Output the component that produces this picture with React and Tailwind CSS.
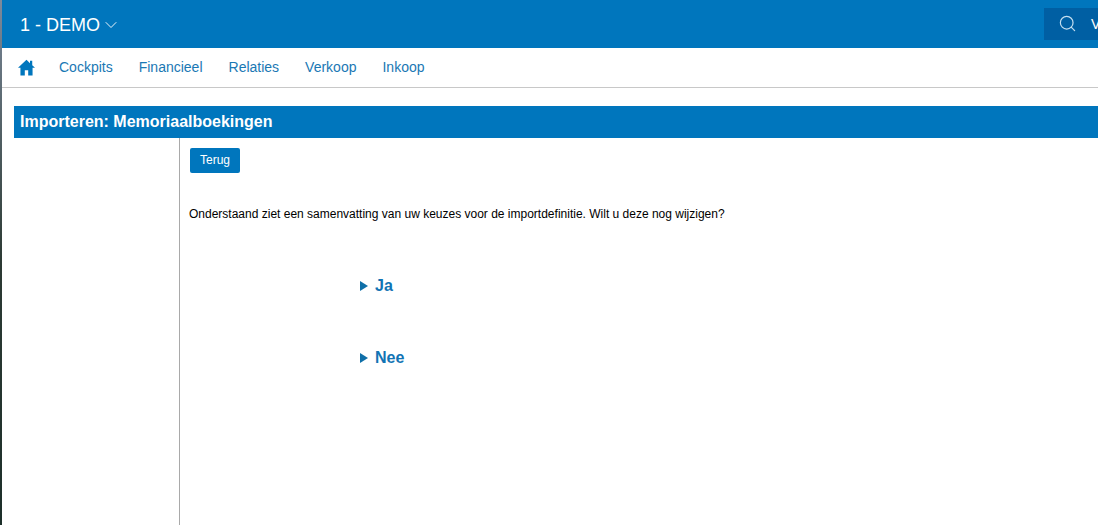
import React from 'react';
import { ChevronDown, Search } from 'lucide-react';

const menuItems = ['Cockpits', 'Financieel', 'Relaties', 'Verkoop', 'Inkoop'];
const choices = ['Ja', 'Nee'];

const HomeIcon = () => (
  <svg viewBox="0 0 16 16" className="w-[17px] h-[17px] fill-[#0076bd]">
    <path d="M8 .8 0 8.2h2.3V15.5h4.1v-4.9h3.2v4.9h4.1V8.2H16l-2.6-2.4V1.6h-2.1v2.3z" />
  </svg>
);

const App = () => {
  return (
    <div className="flex h-[525px] w-[1098px] overflow-hidden bg-white font-['Liberation_Sans',Arial,sans-serif]">
      {/* Streepje van de achtergrond links */}
      <div className="w-[2px] flex-shrink-0 bg-gradient-to-b from-[#7d8a9c] via-[#2c3a34] to-[#1d2f2a]" />

      <div className="flex flex-col flex-1 min-w-0">
        {/* Top bar */}
        <header className="h-12 flex-shrink-0 bg-[#0076bd] flex items-center justify-between">
          <div className="flex items-center pl-[18px] pt-[2px] text-white">
            <span className="text-[18px]">1 - DEMO</span>
            <ChevronDown className="w-5 h-5 ml-px" strokeWidth={1.1} />
          </div>
          <div className="h-8 w-[54px] bg-[#005fa3] flex items-center pl-[14px] overflow-hidden text-white">
            <Search className="w-[19px] h-[19px] flex-shrink-0 -mt-[2px] text-[#c5dff0]" strokeWidth={1.5} />
            <span className="ml-[14px] text-[14px]">V</span>
          </div>
        </header>

        {/* Menu */}
        <nav className="h-10 flex-shrink-0 flex items-center border-b border-[#c8c8c8] pl-4">
          <HomeIcon />
          <div className="flex items-center gap-[26px] ml-6 text-[14px] text-[#1a78b4]">
            {menuItems.map(item => (
              <span key={item}>{item}</span>
            ))}
          </div>
        </nav>

        {/* Content */}
        <main className="flex flex-col flex-1 min-h-0 pt-[18px] pl-3">
          <h1 className="h-8 flex-shrink-0 bg-[#0076bd] pl-[6px] flex items-center text-[16px] font-bold text-white">
            Importeren: Memoriaalboekingen
          </h1>
          <div className="flex flex-1 min-h-0">
            <aside className="w-[166px] flex-shrink-0 border-r border-[#a9a9a9]" />
            <section className="flex-1 pl-[9px] pt-[10px]">
              <button className="block ml-px h-[25px] w-[50px] rounded-[2px] bg-[#0076bd] pb-px text-[12px] text-white">
                Terug
              </button>
              <p className="mt-[34px] text-[12px] leading-[14px] text-black">
                Onderstaand ziet een samenvatting van uw keuzes voor de importdefinitie. Wilt u deze nog wijzigen?
              </p>
              <div className="flex flex-col gap-[54px] mt-[56px] pl-[171px]">
                {choices.map(choice => (
                  <div key={choice} className="flex items-center h-[18px]">
                    <span className="w-0 h-0 border-y-[5px] border-y-transparent border-l-[8px] border-l-[#0f6fa8]" />
                    <span className="ml-[7px] text-[16px] font-bold text-[#1274b4]">{choice}</span>
                  </div>
                ))}
              </div>
            </section>
          </div>
        </main>
      </div>
    </div>
  );
};

export default App;
